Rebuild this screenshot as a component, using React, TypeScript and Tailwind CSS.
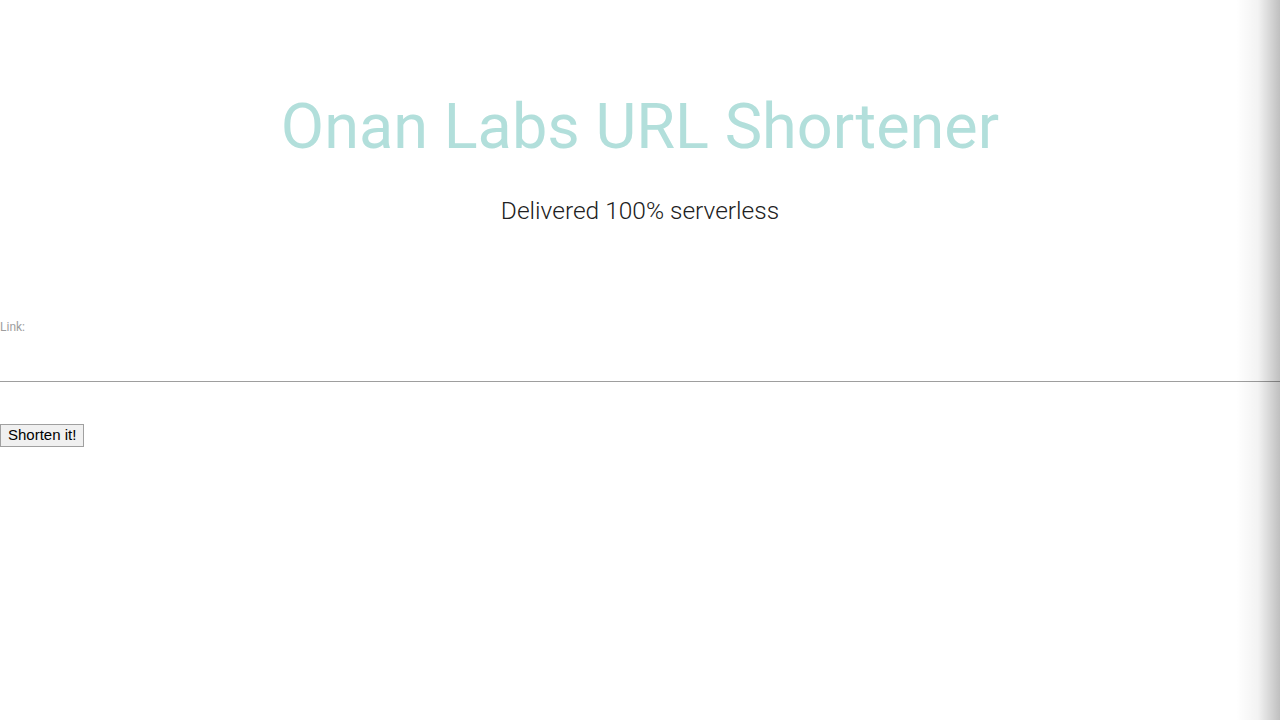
import React from 'react';

const App: React.FC = () => {
  return (
    <div className="relative min-h-[720px] w-full overflow-hidden bg-white font-['Roboto',sans-serif]">
      <header className="pt-[89px] text-center">
        <h1 className="text-[63px] leading-[75px] font-normal text-[#b2dfdb]">Onan Labs URL Shortener</h1>
        <p className="mt-[33px] text-[24.5px] leading-[28px] font-light text-[#212121]">Delivered 100% serverless</p>
      </header>

      <form className="mt-[95px]" onSubmit={(e) => e.preventDefault()}>
        <label htmlFor="link" className="block text-[12px] leading-[14px] text-[#9e9e9e]">
          Link:
        </label>
        <input
          id="link"
          type="text"
          className="block h-[48px] w-full border-0 border-b border-[#9e9e9e] bg-transparent outline-none"
        />
        <div className="mt-[41px]">
          <button
            type="submit"
            className="h-[23px] border border-[#a0a0a0] bg-[#f0f0f0] px-[7px] font-['Liberation_Sans',sans-serif] text-[15px] leading-[20px] text-black"
          >
            Shorten it!
          </button>
        </div>
      </form>

      <div className="pointer-events-none absolute top-0 right-0 h-full w-[44px] bg-gradient-to-r from-transparent via-black/5 to-black/25" />
    </div>
  );
};

export default App;
